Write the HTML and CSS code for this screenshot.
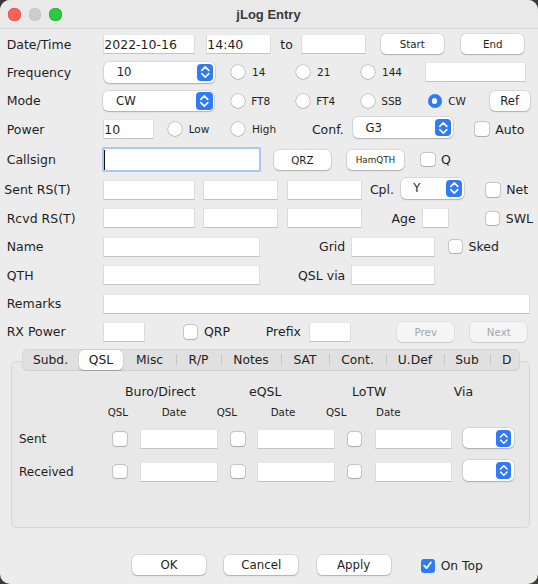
FILE: index.html
```html
<!DOCTYPE html>
<html>
<head>
<meta charset="utf-8">
<title>jLog Entry</title>
<link rel="stylesheet" href="styles.css">
</head>
<body>
<div class="window">
  <div class="titlebar">
    <div class="lights"><span class="light red"></span><span class="light gray"></span><span class="light green"></span></div>
    <div class="title">jLog Entry</div>
    <div></div>
  </div>

  <div class="form">
    <div class="row">
      <span class="lbl">Date/Time</span>
      <div class="tf w93">2022-10-16</div>
      <div class="tf w66 ml10">14:40</div>
      <span class="txt to">to</span>
      <div class="tf w65"></div>
      <div class="btn w63 tallbtn ml14">Start</div>
      <div class="btn w63 tallbtn ml17">End</div>
    </div>

    <div class="row">
      <span class="lbl">Frequency</span>
      <div class="sel w111 ml1">10<span class="stepper"><svg viewBox="0 0 16 18" width="16" height="18"><path d="M4.8 7.4 L8.3 3.9 L11.8 7.4 M4.8 10.6 L8.3 14.1 L11.8 10.6" fill="none" stroke="#fff" stroke-width="1.6" stroke-linecap="round" stroke-linejoin="round"/></svg></span></div>
      <div class="rb-item w65 ml16"><span class="rb"></span>14</div>
      <div class="rb-item w65"><span class="rb"></span>21</div>
      <div class="rb-item w64"><span class="rb"></span>144</div>
      <div class="tf w101"></div>
    </div>

    <div class="row">
      <span class="lbl">Mode</span>
      <div class="sel w111 ml05">CW<span class="stepper"><svg viewBox="0 0 16 18" width="16" height="18"><path d="M4.8 7.4 L8.3 3.9 L11.8 7.4 M4.8 10.6 L8.3 14.1 L11.8 10.6" fill="none" stroke="#fff" stroke-width="1.6" stroke-linecap="round" stroke-linejoin="round"/></svg></span></div>
      <div class="rb-item w65 ml16"><span class="rb"></span>FT8</div>
      <div class="rb-item w65"><span class="rb"></span>FT4</div>
      <div class="rb-item w67"><span class="rb"></span>SSB</div>
      <div class="rb-item w62"><span class="rb on"></span>CW</div>
      <div class="btn w40 ref">Ref</div>
    </div>

    <div class="row">
      <span class="lbl">Power</span>
      <div class="tf w51">10</div>
      <div class="rb-item w63 ml14"><span class="rb"></span>Low</div>
      <div class="rb-item w81"><span class="rb"></span>High</div>
      <span class="txt w41">Conf.</span>
      <div class="sel w100 up2">G3<span class="stepper"><svg viewBox="0 0 16 18" width="16" height="18"><path d="M4.8 7.4 L8.3 3.9 L11.8 7.4 M4.8 10.6 L8.3 14.1 L11.8 10.6" fill="none" stroke="#fff" stroke-width="1.6" stroke-linecap="round" stroke-linejoin="round"/></svg></span></div>
      <div class="cb-item ml22"><span class="cb"></span>Auto</div>
    </div>

    <div class="row tall">
      <span class="lbl">Callsign</span>
      <div class="tf focus w159"><span class="caret"></span></div>
      <div class="btn w57 ml13">QRZ</div>
      <div class="btn w57 ml16 small">HamQTH</div>
      <div class="cb-item ml17"><span class="cb"></span>Q</div>
    </div>

    <div class="row">
      <span class="lbl shift">Sent RS(T)</span>
      <div class="tf w92"></div>
      <div class="tf w75 ml8"></div>
      <div class="tf w75 ml8"></div>
      <span class="txt w31 ml8">Cpl.</span>
      <div class="sel w63 up2">Y<span class="stepper"><svg viewBox="0 0 16 18" width="16" height="18"><path d="M4.8 7.4 L8.3 3.9 L11.8 7.4 M4.8 10.6 L8.3 14.1 L11.8 10.6" fill="none" stroke="#fff" stroke-width="1.6" stroke-linecap="round" stroke-linejoin="round"/></svg></span></div>
      <div class="cb-item ml22"><span class="cb"></span>Net</div>
    </div>

    <div class="row">
      <span class="lbl">Rcvd RS(T)</span>
      <div class="tf w92"></div>
      <div class="tf w75 ml8"></div>
      <div class="tf w75 ml8"></div>
      <span class="txt rt w60">Age</span>
      <div class="tf w28"></div>
      <div class="cb-item ml36"><span class="cb"></span>SWL</div>
    </div>

    <div class="row">
      <span class="lbl">Name</span>
      <div class="tf w157"></div>
      <span class="txt rt w91">Grid</span>
      <div class="tf w84"></div>
      <div class="cb-item ml13"><span class="cb"></span>Sked</div>
    </div>

    <div class="row">
      <span class="lbl">QTH</span>
      <div class="tf w157"></div>
      <span class="txt rt w91">QSL via</span>
      <div class="tf w84"></div>
    </div>

    <div class="row">
      <span class="lbl">Remarks</span>
      <div class="tf w428"></div>
    </div>

    <div class="row">
      <span class="lbl">RX Power</span>
      <div class="tf w43"></div>
      <div class="cb-item w82 ml38"><span class="cb"></span>QRP</div>
      <span class="txt w43">Prefix</span>
      <div class="tf w43"></div>
      <div class="btn dis w57 ml46">Prev</div>
      <div class="btn dis w57 ml16">Next</div>
    </div>
  </div>

  <div class="tabpanel">
    <div class="tabbar">
      <div class="tab">Subd.</div>
      <div class="tab on">QSL</div>
      <div class="tab">Misc</div>
      <div class="tab sep">R/P</div>
      <div class="tab sep">Notes</div>
      <div class="tab sep">SAT</div>
      <div class="tab sep">Cont.</div>
      <div class="tab sep">U.Def</div>
      <div class="tab sep">Sub</div>
      <div class="tab sep">D</div>
    </div>

    <div class="qhead">
      <span class="qh-buro">Buro/Direct</span>
      <span class="qh-eqsl">eQSL</span>
      <span class="qh-lotw">LoTW</span>
      <span>Via</span>
    </div>
    <div class="qsub">
      <span class="qs1">QSL</span>
      <span class="qs2">Date</span>
      <span class="qs3">QSL</span>
      <span class="qs4">Date</span>
      <span class="qs5">QSL</span>
      <span>Date</span>
    </div>
    <div class="qrow first">
      <span class="qlbl">Sent</span>
      <span class="cb"></span>
      <div class="tf w78 ml13"></div>
      <span class="cb ml13"></span>
      <div class="tf w77 ml12"></div>
      <span class="cb ml13"></span>
      <div class="tf w77 ml13"></div>
      <div class="sel via">&nbsp;<span class="stepper sm"><svg viewBox="0 0 16 18" width="15" height="17"><path d="M4.8 7.4 L8.3 3.9 L11.8 7.4 M4.8 10.6 L8.3 14.1 L11.8 10.6" fill="none" stroke="#fff" stroke-width="1.6" stroke-linecap="round" stroke-linejoin="round"/></svg></span></div>
    </div>
    <div class="qrow second">
      <span class="qlbl">Received</span>
      <span class="cb"></span>
      <div class="tf w78 ml13"></div>
      <span class="cb ml13"></span>
      <div class="tf w77 ml12"></div>
      <span class="cb ml13"></span>
      <div class="tf w77 ml13"></div>
      <div class="sel via">&nbsp;<span class="stepper sm"><svg viewBox="0 0 16 18" width="15" height="17"><path d="M4.8 7.4 L8.3 3.9 L11.8 7.4 M4.8 10.6 L8.3 14.1 L11.8 10.6" fill="none" stroke="#fff" stroke-width="1.6" stroke-linecap="round" stroke-linejoin="round"/></svg></span></div>
    </div>
  </div>

  <div class="bottom">
    <div class="btn big w74">OK</div>
    <div class="btn big w74 ml18">Cancel</div>
    <div class="btn big w74 ml18">Apply</div>
    <div class="cb-item ontop"><span class="cb on"><svg viewBox="0 0 14 14" width="13" height="13"><path d="M3.4 7.2 L6 9.8 L10.6 3.8" fill="none" stroke="#fff" stroke-width="1.9" stroke-linecap="round" stroke-linejoin="round"/></svg></span>On Top</div>
  </div>
</div>
</body>
</html>
```

FILE: styles.css
```css
* { box-sizing: border-box; }
html, body { margin: 0; padding: 0; }
body {
  width: 538px;
  height: 584px;
  overflow: hidden;
  background: #3d3934;
  font-family: "DejaVu Sans", sans-serif;
  color: #1f1f1f;
}
.window {
  width: 538px;
  height: 584px;
  background: #ececec;
  border-radius: 10px;
  overflow: hidden;
  display: flex;
  flex-direction: column;
}

/* title bar */
.titlebar {
  height: 29px;
  flex: none;
  border-bottom: 1px solid #d6d6d6;
  background: #e9e9e9;
  display: grid;
  grid-template-columns: 1fr auto 1fr;
  align-items: center;
  padding: 0 8px;
}
.lights { display: flex; gap: 8px; margin-top: 1px; }
.light { width: 12.5px; height: 12.5px; border-radius: 50%; }
.light.red { background: #fe5f57; box-shadow: inset 0 0 0 0.5px #e1463f; }
.light.gray { background: #cdcdcd; box-shadow: inset 0 0 0 0.5px #bcbcbc; }
.light.green { background: #29c940; box-shadow: inset 0 0 0 0.5px #1eaa32; }
.title {
  font-family: "Liberation Sans", Arial, sans-serif;
  font-weight: bold;
  font-size: 13px;
  color: #3a3a3a;
  margin-left: -1px;
}

/* form rows */
.form {
  display: flex;
  flex-direction: column;
  gap: 6.4px;
  padding-top: 4px;
  flex: none;
}
.row {
  display: flex;
  align-items: center;
  height: 22px;
  padding-left: 6.7px;
}
.row.tall { height: 26px; }
.lbl { width: 96px; flex: none; font-size: 12.5px; }
.lbl.shift { margin-left: -2.4px; width: 98.4px; }
.txt { flex: none; font-size: 12.5px; white-space: nowrap; }
.txt.rt { text-align: right; padding-right: 6px; }
.to { margin-left: 9px; width: 21px; }

/* text fields */
.tf {
  flex: none;
  height: 20px;
  background: #fff;
  border: 1px solid #dcdcdc;
  border-top-color: #e6e6e6;
  border-bottom-color: #c3c3c3;
  font-size: 12.5px;
  padding-left: 0.6px;
  display: flex;
  align-items: center;
  white-space: nowrap;
}
.tf.focus {
  height: 25.6px;
  margin-left: -1px;
  border: 2.5px solid #a9c7ef;
  border-radius: 2px;
  padding-left: 0.6px;
}
.caret { width: 1px; height: 20px; background: #111; }

/* buttons */
.btn {
  flex: none;
  height: 20px;
  background: #fff;
  border-radius: 5px;
  box-shadow: 0 0 0 0.5px rgba(0,0,0,0.16), 0 1px 1.5px rgba(0,0,0,0.2);
  font-size: 10.3px;
  display: flex;
  align-items: center;
  justify-content: center;
  color: #1f1f1f;
}
.btn.tallbtn { height: 20.7px; }
.btn.ref { font-size: 11.7px; }
.btn.small { font-size: 8.8px; }
.btn.big { font-size: 11.8px; height: 20.6px; }
.btn.dis {
  background: #f5f5f5;
  color: #a6a6a6;
  box-shadow: 0 0 0 0.5px rgba(0,0,0,0.09), 0 1px 1px rgba(0,0,0,0.1);
}

/* selects */
.sel {
  flex: none;
  height: 20.5px;
  background: #fff;
  border-radius: 5px;
  box-shadow: 0 0 0 0.5px rgba(0,0,0,0.16), 0 1px 1.5px rgba(0,0,0,0.2);
  display: flex;
  align-items: center;
  justify-content: space-between;
  padding-left: 12.7px;
  padding-right: 1.7px;
  font-size: 11.7px;
}
.sel.up2 { margin-bottom: 3px; }
.stepper {
  width: 16.6px;
  height: 17.6px;
  background: #2f7bf5;
  border-radius: 4px;
  display: flex;
  align-items: center;
  justify-content: center;
}
.stepper.sm { width: 15px; height: 17px; }
.sel.via { width: 51px; margin-left: 10.7px; margin-bottom: 2px; padding-right: 2.7px; }

/* radios and checkboxes */
.rb-item { flex: none; display: flex; align-items: center; font-size: 10.5px; }
.rb {
  flex: none;
  width: 14px;
  height: 14px;
  border-radius: 50%;
  background: #fff;
  box-shadow: 0 0 0 0.5px rgba(0,0,0,0.28), 0 0.5px 1px rgba(0,0,0,0.18);
  margin-right: 6.7px;
}
.rb.on {
  background: #2f7bf5;
  box-shadow: none;
  display: flex;
  align-items: center;
  justify-content: center;
}
.rb.on::after { content: ""; width: 5.5px; height: 5.5px; border-radius: 50%; background: #fff; }

.cb-item { flex: none; display: flex; align-items: center; font-size: 12.5px; }
.cb {
  flex: none;
  width: 13.4px;
  height: 13.4px;
  border-radius: 3px;
  background: #fff;
  box-shadow: 0 0 0 0.5px rgba(0,0,0,0.3), 0 0.5px 1px rgba(0,0,0,0.14);
}
.cb-item .cb { margin-right: 6.5px; }
.cb.on {
  background: #2f7bf5;
  box-shadow: none;
  display: flex;
  align-items: center;
  justify-content: center;
}

/* widths and gaps */
.w28 { width: 27.6px; } .w31 { width: 30.7px; } .w40 { width: 40px; }
.w41 { width: 41px; } .w43 { width: 42.8px; } .w51 { width: 51px; }
.w57 { width: 56.8px; } .w60 { width: 60px; } .w62 { width: 62px; }
.w63 { width: 63.3px; } .w64 { width: 64px; } .w65 { width: 65px; }
.w66 { width: 65.6px; } .w67 { width: 67px; } .w74 { width: 74px; }
.w75 { width: 75px; } .w77 { width: 77.3px; } .w78 { width: 78px; }
.w81 { width: 80.6px; } .w82 { width: 81.7px; } .w84 { width: 84px; }
.w91 { width: 91.3px; } .w92 { width: 92.3px; } .w93 { width: 92.3px; }
.w100 { width: 100px; } .w101 { width: 101px; } .w111 { width: 111px; }
.w157 { width: 157.3px; } .w159 { width: 159px; } .w428 { width: 427.6px; }
.ml05 { margin-left: 0.6px; } .ml1 { margin-left: 1.3px; }
.ml8 { margin-left: 8.3px; } .ml10 { margin-left: 10.7px; }
.ml12 { margin-left: 12.6px; } .ml13 { margin-left: 13.3px; }
.ml14 { margin-left: 14.3px; } .ml16 { margin-left: 16.3px; }
.ml17 { margin-left: 17.3px; } .ml18 { margin-left: 18.3px; }
.ml22 { margin-left: 22.5px; } .ml36 { margin-left: 36.7px; }
.ml38 { margin-left: 38.6px; } .ml46 { margin-left: 46px; }

/* tab panel */
.tabpanel {
  flex: none;
  margin: 17.7px 0 0 11.3px;
  width: 518.7px;
  height: 167.6px;
  border: 1px solid #d5d5d5;
  border-radius: 5px;
  background: #e8e8e8;
}
.tabbar {
  margin: -12.4px 0 0 9.7px;
  width: 498px;
  height: 21.4px;
  background: #e0e0e0;
  border-radius: 6px;
  box-shadow: inset 0 0 0 0.5px #cdcdcd, inset 0 -1px 0 #d0d0d0;
  display: flex;
  align-items: center;
  overflow: hidden;
}
.tab {
  flex: none;
  height: 100%;
  display: flex;
  align-items: center;
  justify-content: center;
  font-size: 12.3px;
  color: #222;
}
.tab.sep {
  background: linear-gradient(#c6c6c6, #c6c6c6) left center / 1px 11px no-repeat;
}
.tab.on {
  height: 20px;
  background: #fff;
  border-radius: 5px;
  box-shadow: 0 0.5px 1.5px rgba(0,0,0,0.28);
}
.tab:nth-child(1) { width: 57px; }
.tab:nth-child(2) { width: 44px; }
.tab:nth-child(3) { width: 53px; }
.tab:nth-child(4) { width: 45px; }
.tab:nth-child(5) { width: 60px; }
.tab:nth-child(6) { width: 48px; }
.tab:nth-child(7) { width: 57px; }
.tab:nth-child(8) { width: 58px; }
.tab:nth-child(9) { width: 46px; }
.tab:nth-child(10) { width: 36px; justify-content: flex-start; padding-left: 12px; }

.qhead {
  display: flex;
  align-items: center;
  height: 20px;
  margin-top: 11.3px;
  font-size: 12.5px;
  white-space: nowrap;
}
.qh-buro { margin-left: 112.7px; width: 124px; }
.qh-eqsl { width: 103px; }
.qh-lotw { width: 101.7px; }
.qsub {
  display: flex;
  align-items: center;
  height: 16px;
  margin-top: 2px;
  font-size: 10.3px;
  white-space: nowrap;
}
.qs1 { margin-left: 95.4px; width: 54px; }
.qs2 { width: 55px; }
.qs3 { width: 54px; }
.qs4 { width: 55.3px; }
.qs5 { width: 50px; }
.qrow { display: flex; align-items: center; height: 20px; }
.qrow.first { margin-top: 9.3px; }
.qrow.second { margin-top: 12.4px; }
.qlbl { flex: none; width: 101px; padding-left: 6.7px; font-size: 12px; }

/* bottom bar */
.bottom {
  flex: none;
  display: flex;
  align-items: center;
  height: 20.6px;
  margin-top: 26.7px;
  padding-left: 132px;
}
.ontop { margin-left: 30.7px; font-size: 12.3px; margin-top: 1.5px; }
.ontop .cb { margin-right: 6px; }
```
